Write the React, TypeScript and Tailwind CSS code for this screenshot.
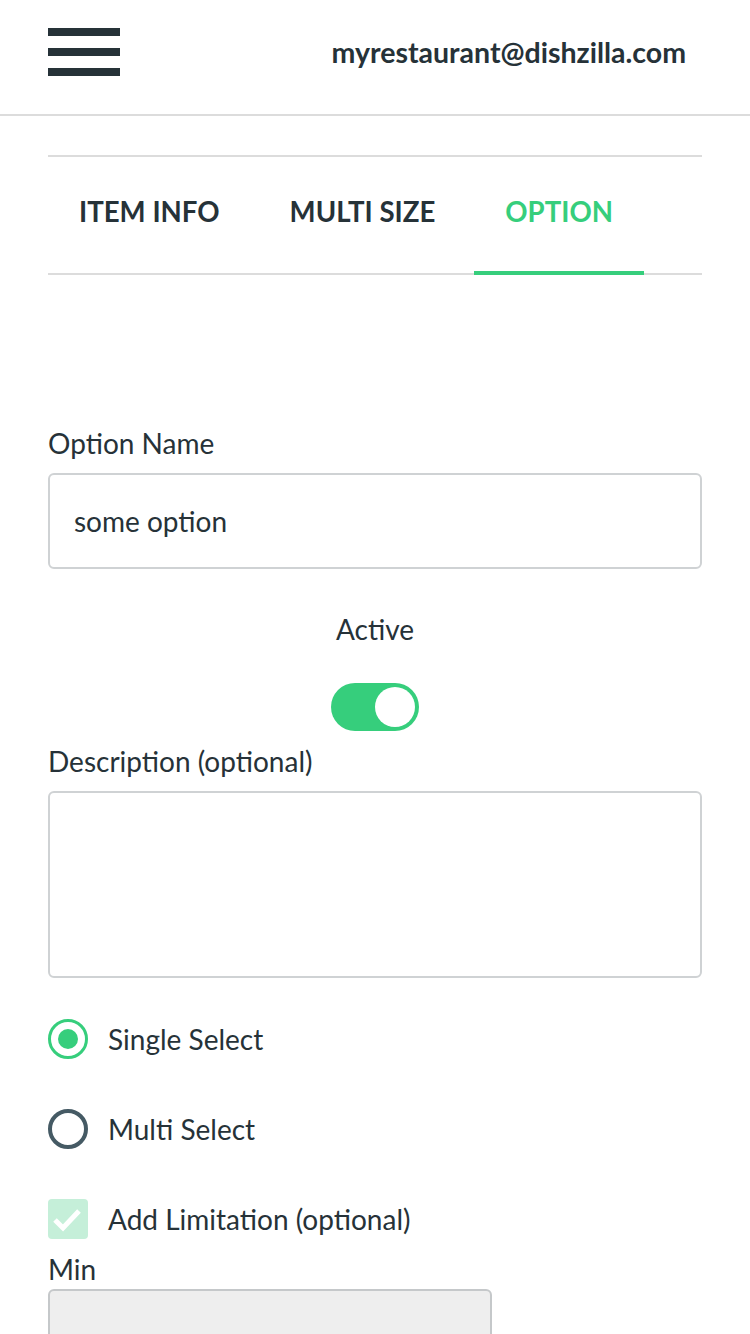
import React from "react";

export default function App() {
  return (
    <div className="w-[750px] min-h-[1334px] bg-white text-[#263238] font-['Lato',sans-serif] overflow-hidden">
      <header className="h-[116px] flex items-start justify-between border-b-2 border-[#dcdcdc] px-[48px]">
        <div className="flex flex-col gap-[12px] pt-[28px]">
          <div className="w-[72px] h-[8px] bg-[#263238]" />
          <div className="w-[72px] h-[8px] bg-[#263238]" />
          <div className="w-[72px] h-[8px] bg-[#263238]" />
        </div>
        <div className="pt-[32px] pr-[16px] text-[28.5px] leading-[40px] font-bold">myrestaurant@dishzilla.com</div>
      </header>

      <div className="px-[48px]">
        <div className="mt-[39px] border-t-2 border-b-2 border-[#dcdcdc] flex gap-[8px] h-[120px]">
          <div className="px-[31px] pb-[6px] flex items-center text-[27.6px] font-bold">ITEM INFO</div>
          <div className="px-[31px] pb-[6px] flex items-center text-[27.6px] font-bold">MULTI SIZE</div>
          <div className="px-[31px] pb-[6px] flex items-center text-[27.6px] font-bold text-[#36ce7c] border-b-4 border-[#36ce7c] relative top-[2px]">OPTION</div>
        </div>

        <div className="mt-[148px] text-[28px] leading-[40px]">Option Name</div>
        <div className="mt-[10px] h-[96px] border-2 border-[#cfd2d4] rounded-[6px] flex items-center px-[24px] text-[28px]">some option</div>

        <div className="mt-[40px] text-center text-[28px] leading-[40px]">Active</div>
        <div className="mt-[34px] flex justify-center">
          <div className="w-[88px] h-[48px] rounded-full bg-[#36ce7c] flex items-center justify-end pr-[4px]">
            <div className="w-[40px] h-[40px] rounded-full bg-white" />
          </div>
        </div>

        <div className="mt-[10px] text-[28px] leading-[40px]">Description (optional)</div>
        <div className="mt-[10px] h-[187px] border-2 border-[#cfd2d4] rounded-[6px]" />

        <div className="mt-[41px] flex items-center gap-[20px] h-[40px]">
          <div className="w-[40px] h-[40px] rounded-full border-[3px] border-[#36ce7c] flex items-center justify-center">
            <div className="w-[20px] h-[20px] rounded-full bg-[#36ce7c]" />
          </div>
          <span className="text-[28px] leading-[40px]">Single Select</span>
        </div>
        <div className="mt-[50px] flex items-center gap-[20px] h-[40px]">
          <div className="w-[40px] h-[40px] rounded-full border-[4px] border-[#455a64]" />
          <span className="text-[28px] leading-[40px]">Multi Select</span>
        </div>
        <div className="mt-[50px] flex items-center gap-[20px] h-[40px]">
          <div className="w-[40px] h-[40px] rounded-[4px] bg-[#c5efd9] flex items-center justify-center">
            <svg width="32" height="32" viewBox="0 0 32 32" fill="none">
              <path d="M3 17 L11 25 L27 8" stroke="white" strokeWidth="5" />
            </svg>
          </div>
          <span className="text-[28px] leading-[40px]">Add Limitation (optional)</span>
        </div>

        <div className="mt-[10px] text-[28px] leading-[40px]">Min</div>
        <div className="w-[444px] h-[96px] border-2 border-[#c5c8ca] rounded-[6px] bg-[#eeeeee]" />
      </div>
    </div>
  );
}
